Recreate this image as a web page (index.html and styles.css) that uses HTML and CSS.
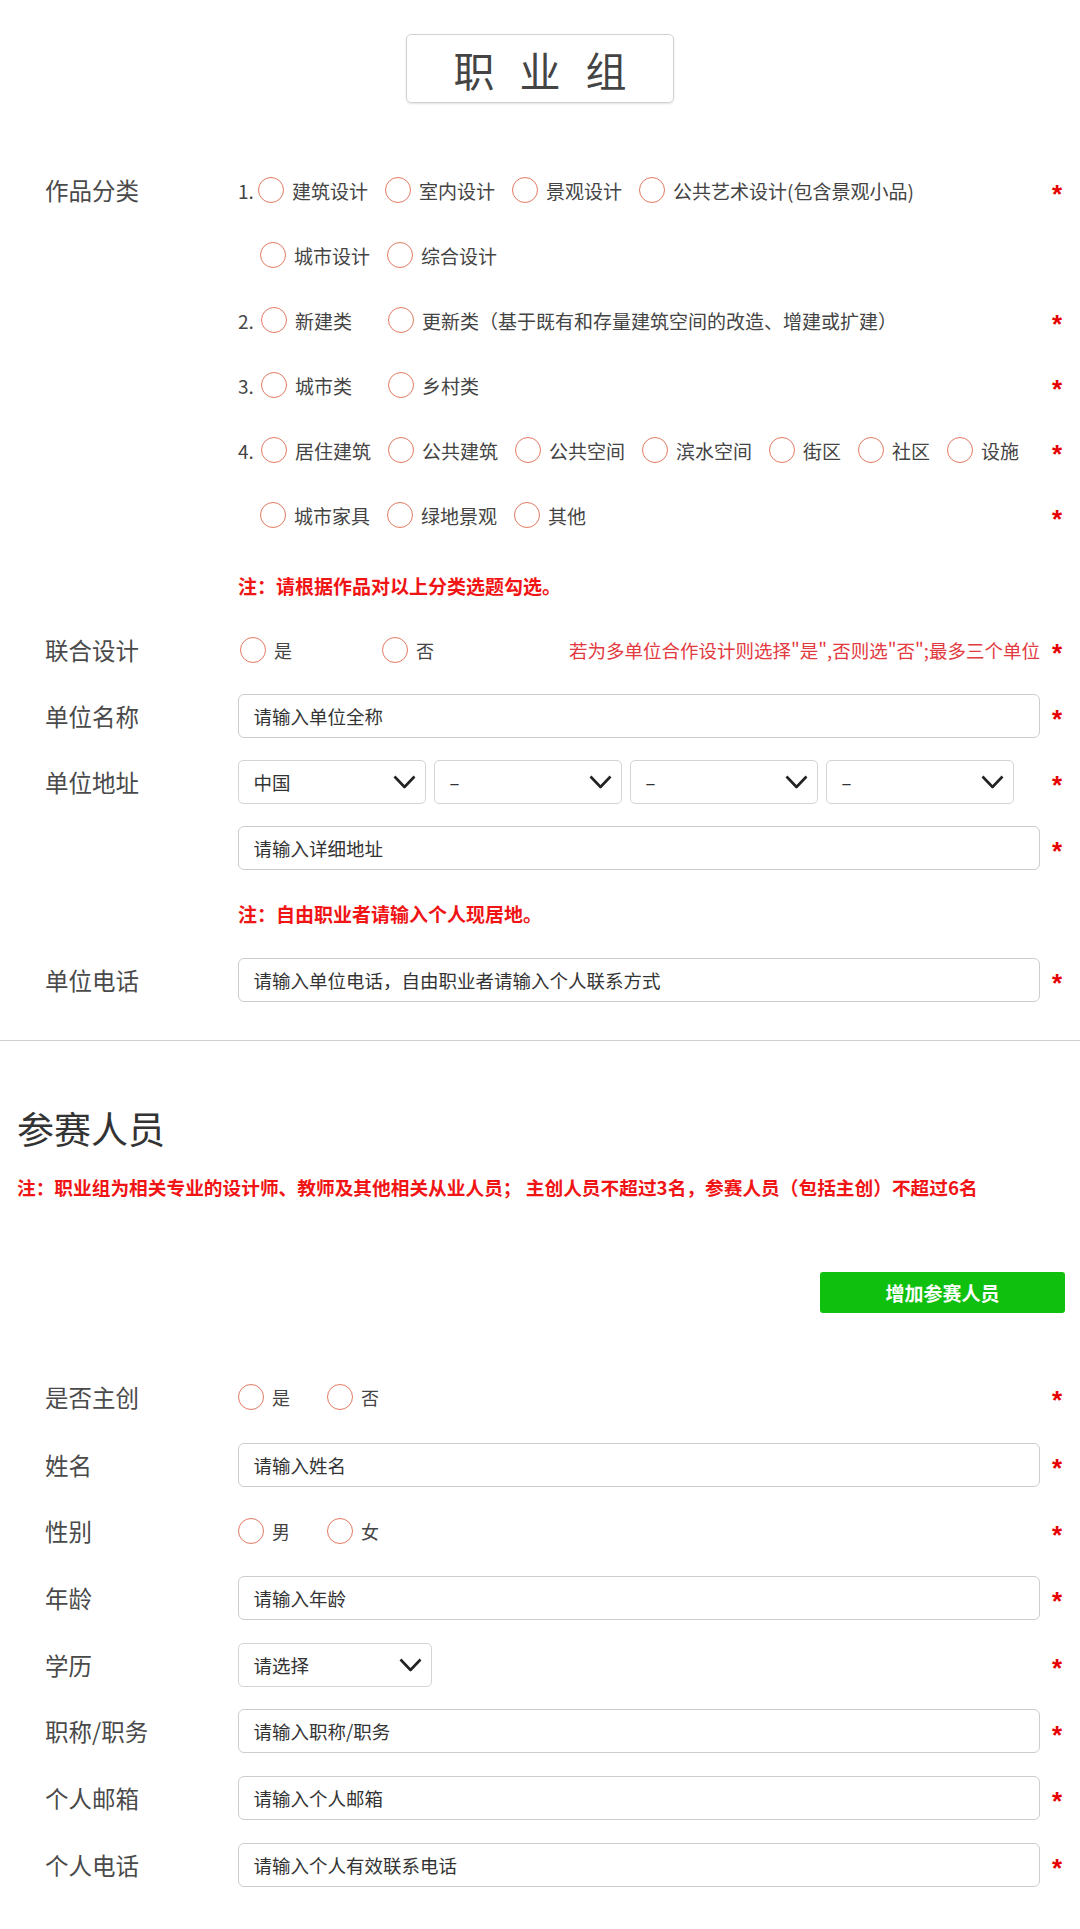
FILE: index.html
```html
<!DOCTYPE html>
<html lang="zh-CN">
<head>
    <meta charset="UTF-8">
    <meta name="viewport" content="width=device-width, initial-scale=1.0">
    <title>职业组 - 报名</title>
    <link rel="stylesheet" href="styles.css">
</head>
<body>

<div class="group-title">职业组</div>

<!-- 作品与单位信息 -->
<form class="form">
    <div class="field field-cat">
        <div class="field-label">作品分类</div>
        <div class="field-body">
            <div class="line">
                <div class="ctrl">
                    <span class="num one">1.</span>
                    <label class="opt"><input type="radio" name="c1">建筑设计</label>
                    <label class="opt"><input type="radio" name="c1">室内设计</label>
                    <label class="opt"><input type="radio" name="c1">景观设计</label>
                    <label class="opt"><input type="radio" name="c1">公共艺术设计(包含景观小品)</label>
                </div>
                <span class="req">*</span>
            </div>
            <div class="line">
                <div class="ctrl">
                    <span class="num blank"></span>
                    <label class="opt"><input type="radio" name="c1">城市设计</label>
                    <label class="opt"><input type="radio" name="c1">综合设计</label>
                </div>
                <span class="req"></span>
            </div>
            <div class="line">
                <div class="ctrl">
                    <span class="num">2.</span>
                    <label class="opt w3"><input type="radio" name="c2">新建类</label>
                    <label class="opt"><input type="radio" name="c2">更新类（基于既有和存量建筑空间的改造、增建或扩建）</label>
                </div>
                <span class="req">*</span>
            </div>
            <div class="line">
                <div class="ctrl">
                    <span class="num">3.</span>
                    <label class="opt w3"><input type="radio" name="c3">城市类</label>
                    <label class="opt"><input type="radio" name="c3">乡村类</label>
                </div>
                <span class="req">*</span>
            </div>
            <div class="line">
                <div class="ctrl">
                    <span class="num">4.</span>
                    <label class="opt"><input type="radio" name="c4">居住建筑</label>
                    <label class="opt"><input type="radio" name="c4">公共建筑</label>
                    <label class="opt"><input type="radio" name="c4">公共空间</label>
                    <label class="opt"><input type="radio" name="c4">滨水空间</label>
                    <label class="opt"><input type="radio" name="c4">街区</label>
                    <label class="opt"><input type="radio" name="c4">社区</label>
                    <label class="opt"><input type="radio" name="c4">设施</label>
                </div>
                <span class="req">*</span>
            </div>
            <div class="line">
                <div class="ctrl">
                    <span class="num blank"></span>
                    <label class="opt"><input type="radio" name="c4">城市家具</label>
                    <label class="opt"><input type="radio" name="c4">绿地景观</label>
                    <label class="opt"><input type="radio" name="c4">其他</label>
                </div>
                <span class="req">*</span>
            </div>
            <div class="line note-line">
                <div class="ctrl">
                    <span class="note">注：请根据作品对以上分类选题勾选。</span>
                </div>
                <span class="req"></span>
            </div>
        </div>
    </div>

    <div class="field">
        <div class="field-label">联合设计</div>
        <div class="field-body">
            <div class="line">
                <div class="ctrl">
                    <label class="opt yn wide"><input type="radio" name="union">是</label>
                    <label class="opt yn"><input type="radio" name="union">否</label>
                    <span class="hint">若为多单位合作设计则选择"是",否则选"否";最多三个单位</span>
                </div>
                <span class="req">*</span>
            </div>
        </div>
    </div>

    <div class="field">
        <div class="field-label">单位名称</div>
        <div class="field-body">
            <div class="line">
                <div class="ctrl"><input class="text-input" type="text" placeholder="请输入单位全称"></div>
                <span class="req">*</span>
            </div>
        </div>
    </div>

    <div class="field">
        <div class="field-label">单位地址</div>
        <div class="field-body">
            <div class="line">
                <div class="ctrl select-group">
                    <div class="select"><span>中国</span><svg width="23" height="14" viewBox="0 0 23 14"><path d="M1.5 1.5 L11.5 12 L21.5 1.5"/></svg></div>
                    <div class="select"><span>–</span><svg width="23" height="14" viewBox="0 0 23 14"><path d="M1.5 1.5 L11.5 12 L21.5 1.5"/></svg></div>
                    <div class="select"><span>–</span><svg width="23" height="14" viewBox="0 0 23 14"><path d="M1.5 1.5 L11.5 12 L21.5 1.5"/></svg></div>
                    <div class="select"><span>–</span><svg width="23" height="14" viewBox="0 0 23 14"><path d="M1.5 1.5 L11.5 12 L21.5 1.5"/></svg></div>
                </div>
                <span class="req">*</span>
            </div>
            <div class="line">
                <div class="ctrl"><input class="text-input" type="text" placeholder="请输入详细地址"></div>
                <span class="req">*</span>
            </div>
            <div class="line">
                <div class="ctrl"><span class="note">注：自由职业者请输入个人现居地。</span></div>
                <span class="req"></span>
            </div>
        </div>
    </div>

    <div class="field">
        <div class="field-label">单位电话</div>
        <div class="field-body">
            <div class="line">
                <div class="ctrl"><input class="text-input" type="text" placeholder="请输入单位电话，自由职业者请输入个人联系方式"></div>
                <span class="req">*</span>
            </div>
        </div>
    </div>
</form>

<div class="divider"></div>

<!-- 参赛人员 -->
<h2 class="section-title">参赛人员</h2>
<p class="section-note">注：职业组为相关专业的设计师、教师及其他相关从业人员； 主创人员不超过3名，参赛人员（包括主创）不超过6名</p>

<div class="actions">
    <button type="button" class="add-btn">增加参赛人员</button>
</div>

<form class="form members">
    <div class="field field-lead">
        <div class="field-label">是否主创</div>
        <div class="field-body">
            <div class="line">
                <div class="ctrl">
                    <label class="opt yn"><input type="radio" name="lead">是</label>
                    <label class="opt yn"><input type="radio" name="lead">否</label>
                </div>
                <span class="req">*</span>
            </div>
        </div>
    </div>
    <div class="field">
        <div class="field-label">姓名</div>
        <div class="field-body">
            <div class="line">
                <div class="ctrl"><input class="text-input" type="text" placeholder="请输入姓名"></div>
                <span class="req">*</span>
            </div>
        </div>
    </div>
    <div class="field">
        <div class="field-label">性别</div>
        <div class="field-body">
            <div class="line">
                <div class="ctrl">
                    <label class="opt yn"><input type="radio" name="sex">男</label>
                    <label class="opt yn"><input type="radio" name="sex">女</label>
                </div>
                <span class="req">*</span>
            </div>
        </div>
    </div>
    <div class="field">
        <div class="field-label">年龄</div>
        <div class="field-body">
            <div class="line">
                <div class="ctrl"><input class="text-input" type="text" placeholder="请输入年龄"></div>
                <span class="req">*</span>
            </div>
        </div>
    </div>
    <div class="field">
        <div class="field-label">学历</div>
        <div class="field-body">
            <div class="line">
                <div class="ctrl">
                    <div class="select edu"><span>请选择</span><svg width="23" height="14" viewBox="0 0 23 14"><path d="M1.5 1.5 L11.5 12 L21.5 1.5"/></svg></div>
                </div>
                <span class="req">*</span>
            </div>
        </div>
    </div>
    <div class="field">
        <div class="field-label">职称/职务</div>
        <div class="field-body">
            <div class="line">
                <div class="ctrl"><input class="text-input" type="text" placeholder="请输入职称/职务"></div>
                <span class="req">*</span>
            </div>
        </div>
    </div>
    <div class="field">
        <div class="field-label">个人邮箱</div>
        <div class="field-body">
            <div class="line">
                <div class="ctrl"><input class="text-input" type="text" placeholder="请输入个人邮箱"></div>
                <span class="req">*</span>
            </div>
        </div>
    </div>
    <div class="field">
        <div class="field-label">个人电话</div>
        <div class="field-body">
            <div class="line">
                <div class="ctrl"><input class="text-input" type="text" placeholder="请输入个人有效联系电话"></div>
                <span class="req">*</span>
            </div>
        </div>
    </div>
</form>

</body>
</html>
```

FILE: styles.css
```css
body {
    margin: 0;
    font-family: "Noto Sans CJK SC", "Noto Sans", sans-serif;
    color: #444;
    background-color: #fff;
}
.group-title {
    width: 268px;
    height: 69px;
    box-sizing: border-box;
    margin: 34px auto 0;
    padding-left: 25px;
    display: flex;
    align-items: center;
    justify-content: center;
    border: 1.5px solid #d2d2d2;
    border-radius: 5px;
    box-shadow: 0 1px 2px rgba(0, 0, 0, 0.12);
    font-size: 41px;
    letter-spacing: 25px;
    color: #444;
}
.form {
    margin: 65px 0 0;
    padding-left: 45px;
}
.field {
    display: grid;
    grid-template-columns: 193px 1fr;
}
.field-label {
    height: 44px;
    line-height: 44px;
    font-size: 23.5px;
    color: #4a4a4a;
    white-space: nowrap;
}
.field-body {
    display: flex;
    flex-direction: column;
}
.line {
    display: flex;
    align-items: center;
    height: 44px;
    margin-bottom: 22px;
}
.field-cat .line {
    margin-bottom: 21px;
}
.field-cat .note-line {
    margin-top: 5.7px;
    margin-bottom: 20.3px;
}
.form > .field:last-child .line:last-child {
    margin-bottom: 0;
}
.ctrl {
    flex: 1;
    min-width: 0;
    display: flex;
    align-items: center;
    font-size: 19px;
    color: #444;
    white-space: nowrap;
}
.req {
    flex: none;
    width: 40px;
    box-sizing: border-box;
    padding: 8px 0 0 12px;
    font: bold 26px "Liberation Sans", sans-serif;
    color: #e60000;
}
.num {
    width: 23px;
    flex: none;
}
.num.one {
    width: 20px;
}
.num.blank {
    width: 22px;
}
.opt {
    display: flex;
    align-items: center;
    margin-right: 17px;
}
.opt.w3 {
    min-width: 110px;
}
.opt input {
    appearance: none;
    -webkit-appearance: none;
    width: 26px;
    height: 26px;
    margin: 0 8px 0 0;
    border: 1.6px solid #e27a62;
    border-radius: 50%;
    background: #fff;
    flex: none;
}
.opt.yn {
    font-size: 18px;
    margin-right: 37px;
}
.opt.yn input {
    margin-right: 8px;
}
.opt.yn.wide {
    margin: 0 90px 0 2px;
}
.hint {
    margin-left: auto;
    font-size: 18.5px;
    color: #e23a3f;
}
.note {
    font-size: 19px;
    font-weight: bold;
    color: #f01414;
}
.text-input {
    width: 100%;
    height: 44px;
    box-sizing: border-box;
    padding: 0 16px 0 14.5px;
    border: 1.5px solid #cdcdcd;
    border-radius: 6px;
    font-family: inherit;
    font-size: 18.5px;
    color: #333;
    background: #fff;
}
.text-input::placeholder {
    color: #333;
}
.select-group {
    gap: 8px;
}
.select {
    width: 188px;
    height: 44px;
    box-sizing: border-box;
    padding: 0 9px 0 14.5px;
    display: flex;
    align-items: center;
    justify-content: space-between;
    border: 1.5px solid #d4d4d4;
    border-radius: 5px;
    font-size: 18.5px;
    color: #333;
}
.select svg path {
    fill: none;
    stroke: #222;
    stroke-width: 2.6;
    stroke-linejoin: round;
}
.select.edu {
    width: 194px;
}
.divider {
    margin-top: 38px;
    height: 1.5px;
    background-color: #d0d0d0;
}
.section-title {
    margin: 68.5px 0 0;
    padding-left: 17px;
    font-size: 37px;
    line-height: 37px;
    font-weight: normal;
    color: #333;
}
.section-note {
    margin: 30px 0 0;
    padding-left: 17px;
    font-size: 18.7px;
    line-height: 19px;
    font-weight: bold;
    color: #f01414;
    white-space: nowrap;
}
.actions {
    display: flex;
    justify-content: flex-end;
    padding-right: 15px;
    margin-top: 76px;
}
.add-btn {
    width: 245px;
    height: 41px;
    border: none;
    border-radius: 3px;
    background-color: #0fc00f;
    color: #fff;
    font-family: inherit;
    font-size: 19px;
    font-weight: bold;
    cursor: pointer;
}
.members {
    margin-top: 61.7px;
}
.members .line {
    margin-bottom: 22.67px;
}
.members .field-lead .line {
    margin-bottom: 24px;
}
```
